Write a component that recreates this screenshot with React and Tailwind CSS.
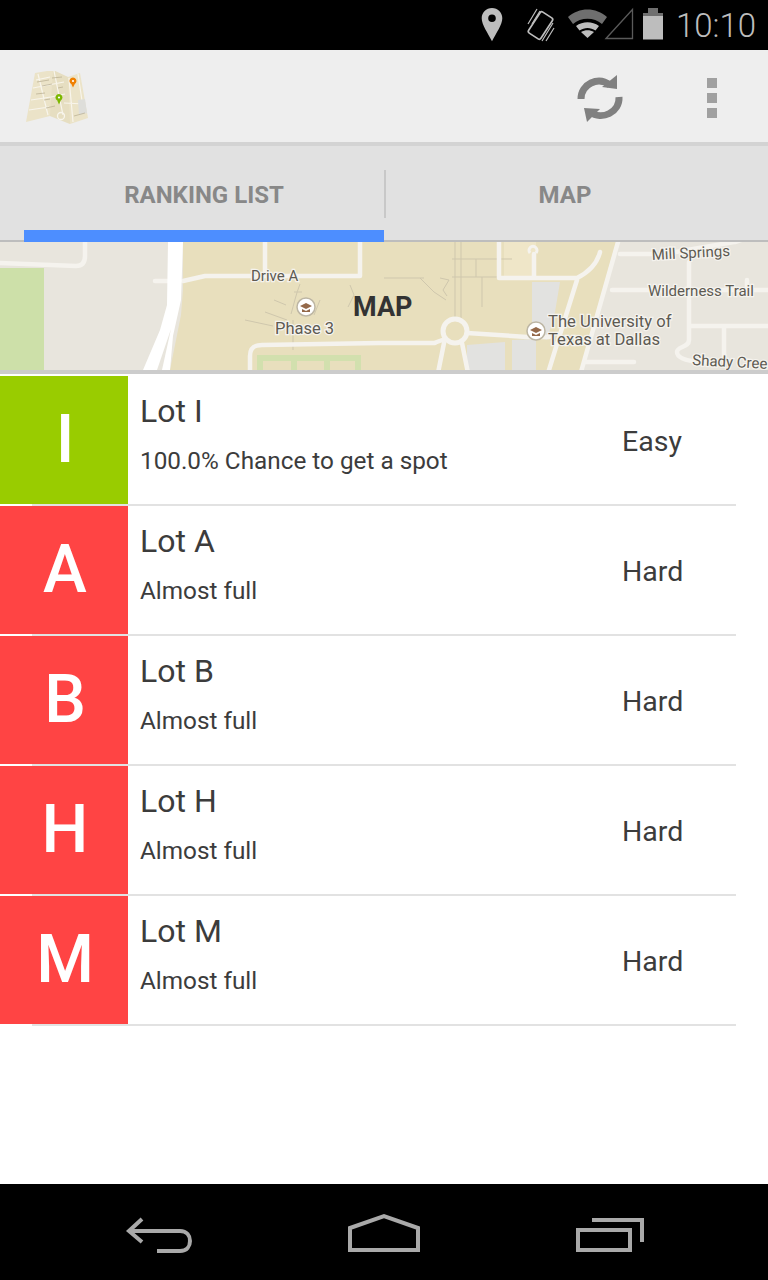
const lots = [
  { letter: 'I', name: 'Lot I', note: '100.0% Chance to get a spot', level: 'Easy', color: 'bg-[#99cc00]' },
  { letter: 'A', name: 'Lot A', note: 'Almost full', level: 'Hard', color: 'bg-[#ff4444]' },
  { letter: 'B', name: 'Lot B', note: 'Almost full', level: 'Hard', color: 'bg-[#ff4444]' },
  { letter: 'H', name: 'Lot H', note: 'Almost full', level: 'Hard', color: 'bg-[#ff4444]' },
  { letter: 'M', name: 'Lot M', note: 'Almost full', level: 'Hard', color: 'bg-[#ff4444]' },
];

function StatusIcons() {
  // viewBox uses screen coordinates so the glyphs can be compared 1:1
  return (
    <svg width="190" height="50" viewBox="476 0 190 50">
      {/* location pin */}
      <path fillRule="evenodd" fill="#bdbdbd" d="M492 8c5.800 0 10.300 4.500 10.300 10.200 0 6.600-6.200 14.800-10.300 23-4.100-8.200-10.300-16.400-10.300-23C481.700 12.500 486.200 8 492 8zm0 6.500a3.800 3.800 0 1 0 0 7.600 3.800 3.800 0 0 0 0-7.600z" />
      {/* vibrate phone */}
      <g fill="none" stroke="#bdbdbd">
        <rect x="533.200" y="13" width="14.600" height="25" rx="2" strokeWidth="1.700" transform="rotate(33 540.500 25.500)" />
        <path strokeWidth="1.200" d="M528 24l9-15M532 24l8-13M542 41l11-18M546 41l8-13" />
      </g>
      {/* wifi */}
      <path fill="#6f6f6f" d="M568 17c11-10 28-10 39 0l-5 7c-8-7-21-7-29 0z" />
      <path fill="#bdbdbd" d="M576 26c7-5 16-5 23 0l-3.500 4.500c-5-3.500-11-3.500-16 0z" />
      <path fill="#bdbdbd" d="M581 32c4-2.500 9-2.500 13 0l-6.500 6z" />
      {/* signal */}
      <path fill="none" stroke="#5a5a5a" strokeWidth="1.300" d="M606 38.500L632.500 9.500v29z" />
      {/* battery */}
      <path fill="#6f6f6f" d="M648 8h10v5h5v3h-20v-3h5z" />
      <rect x="643" y="16" width="20" height="23.500" fill="#bdbdbd" />
    </svg>
  );
}

function SyncIcon() {
  return (
    <svg width="52" height="56" viewBox="574 71 52 56" fill="none">
      <path stroke="#808080" strokeWidth="7" d="M581 99c0-15 17-23 29-14" />
      <path fill="#808080" d="M617 75v14l-15-2z" />
      <path stroke="#808080" strokeWidth="7" d="M619 97c1 15-17 24-29 15" />
      <path fill="#808080" d="M584 108l16 1-13 13z" />
    </svg>
  );
}

function AppLogo() {
  return (
    <svg width="66" height="56" viewBox="24 71 66 56">
      <path fill="#ebe3c8" d="M26 122l9-49 18-3 15 7 12-4 8 45-18 6-20-8z" />
      <path fill="#dcd3b4" d="M53 70l15 7 2 47-20-8z" opacity="0.35" />
      <path fill="none" stroke="#f8f5ec" strokeWidth="1.200" d="M31 100l20-3 14-3M38 74l7 29 3 12M54 71l9 44M33 88l31-6M64 103l21 1M69 78l4 44M78 74l6 40M36 80l14-3M29 110l20-3" />
      <path fill="#dededa" d="M78 100l7-1 2 14-8 2z" />
      <path fill="none" stroke="#bdb295" strokeWidth="0.800" d="M37 82l12-2M42 86l10-2M46 108l9-2M74 116l11-3M52 78l10-1M36 94l9-1M58 88l5-1M44 100l6-1" />
      <circle cx="61" cy="116" r="3.500" fill="none" stroke="#f8f5ec" strokeWidth="1.300" />
      <path fill="#7cb800" d="M59 94a3.500 3.500 0 1 1-.1 0zM57 100h4l-2 4.500z" />
      <circle cx="59" cy="97.500" r="1.100" fill="#fff" />
      <path fill="#f08000" d="M73 77.500a3.500 3.500 0 1 1-.1 0zM71 83.500h4l-2 4z" />
      <circle cx="73" cy="81" r="1.100" fill="#fff" />
    </svg>
  );
}

function MapStrip() {
  const road = { fill: 'none', stroke: '#f5f3ee', strokeLinecap: 'round', strokeLinejoin: 'round' };
  const trail = { fill: 'none', stroke: '#cfc7ad', strokeWidth: 1 };
  const label = { fontFamily: 'Roboto, sans-serif', fill: '#5d5a52', stroke: '#f5f3ee', strokeWidth: 2.500, paintOrder: 'stroke' };
  return (
    <svg width="768" height="128" viewBox="0 242 768 128" className="block">
      <rect x="0" y="242" width="768" height="128" fill="#e8e5dd" />
      <rect x="0" y="268" width="44" height="102" fill="#cde0a9" />
      <path fill="#e8dfbd" d="M183 242h433l-36 128H170l11-55 2-25z" />
      <path fill="#e2e2e0" d="M532 282h28l-5 30-8 28-15-6zM467 345l38-3v28h-38zM512 340l24-1v31h-24z" />
      <path fill="#efe6c8" d="M504 242h32v36h-32z" />

      {/* campus paths and parking grid */}
      <path {...trail} d="M455 242v76M461 242v76M452 259h60M452 277h60M476 259v18M482 277v30M440 278l9 2-6 10 4 6M300 284c-4 10-6 20-9 30M302 292l-8 0M293 320v30M245 320l28 6M350 285l4 10-6 12M384 278l40 0M420 278l14 14 12 8M265 312l22 8M274 300l12 5M320 300l-6 15" />
      <path fill="none" stroke="#d2e0ae" strokeWidth="6" d="M260 370v-12h98v12M294 358v12M327 358v12" />

      {/* roads */}
      <g {...road} strokeWidth="4.500">
        <path d="M0 263l76 3c6 0 9-3 9-10v-14M155 281h13M183 281l22-5h155M265 242v34M360 242v34" />
        <path d="M250 372v-16c0-8 4-11 12-11l118-2h54l14-5M467 333l60 4h22M410 343h25" />
        <path d="M499 242v36h78c12-6 20-14 23-26M534 254v24M577 280l-20 64-8 26" />
        <path d="M618 242l-37 130M620 254h32M612 290h180M689 262v78c0 8-12 6-12 12 0 6 10 9 24 10h10M689 326h90M724 326v36M584 362h50M735 242l30-10M664 254l70-12M747 280v8M444 343l-6 30M462 343l6 30" />
      </g>
      <circle cx="455" cy="331" r="12" fill="#e8dfbd" stroke="#f5f3ee" strokeWidth="5" />
      <path fill="none" stroke="#f5f3ee" strokeWidth="3" d="M530 253a4 4 0 1 1 6 0" />
      <path fill="#ffffff" d="M168 242h15l-2 58-8 36-3 34h-8l9-41-14 41h-14l17-40 7-25z" />

      {/* places */}
      <circle cx="306" cy="307" r="9" fill="#fff" stroke="#bdb6a4" strokeWidth="1.500" />
      <path fill="#94694a" d="M300 306l6-3 6 3-6 3zM302 309l4 2 4-2v3h-8z" />
      <circle cx="536" cy="331" r="9" fill="#fff" stroke="#bdb6a4" strokeWidth="1.500" />
      <path fill="#94694a" d="M530 330l6-3 6 3-6 3zM532 333l4 2 4-2v3h-8z" />

      <text x="251" y="281" fontSize="15" {...label}>Drive A</text>
      <text x="275" y="334" fontSize="16.500" {...label}>Phase 3</text>
      <text x="548" y="327" fontSize="16.600" {...label}>The University of</text>
      <text x="548" y="345" fontSize="16.600" {...label}>Texas at Dallas</text>
      <text x="648" y="296" fontSize="15" {...label}>Wilderness Trail</text>
      <text x="652" y="260" fontSize="15" transform="rotate(-3 652 260)" {...label}>Mill Springs</text>
      <text x="692" y="365" fontSize="15" transform="rotate(3 692 365)" {...label}>Shady Cree</text>
      <text x="353" y="316" fontSize="27" fontWeight="700" fontFamily="Roboto, sans-serif" fill="#333333">MAP</text>
    </svg>
  );
}

function NavBar() {
  return (
    <div className="h-24 bg-black shrink-0">
      <svg width="768" height="96" viewBox="0 1184 768 96" className="block" fill="none" stroke="#a9a9a9" strokeWidth="4">
        <path d="M142 1219l-13 12 13 11M130 1231h50c7 0 10 5 10 10s-3 10-10 10h-23" />
        <path d="M350 1250v-22l34-12 34 12v22z" />
        <path d="M578 1230h52v20h-52zM592 1220h50v22" />
      </svg>
    </div>
  );
}

export default function App() {
  return (
    <div className="w-[768px] h-[1280px] flex flex-col bg-white overflow-hidden font-['Roboto',sans-serif]">
      {/* status bar */}
      <div className="h-[50px] bg-black flex items-center shrink-0 pl-[476px]">
        <StatusIcons />
        <span className="ml-[10px] text-[33px] font-light text-[#bdbdbd] leading-none">10:10</span>
      </div>

      {/* action bar */}
      <div className="h-24 bg-[#eeeeee] border-b-4 border-[#d3d3d3] flex items-center shrink-0 pl-6 pt-[6px]">
        <AppLogo />
        <div className="ml-[484px]">
          <SyncIcon />
        </div>
        <div className="ml-[81px] -mt-[2px] flex flex-col gap-[5px]">
          <div className="w-[10px] h-[10px] bg-[#a0a0a0]" />
          <div className="w-[10px] h-[10px] bg-[#a0a0a0]" />
          <div className="w-[10px] h-[10px] bg-[#a0a0a0]" />
        </div>
      </div>

      {/* tabs */}
      <div className="h-24 bg-[#e1e1e1] border-b-2 border-[#bdbdbd] flex shrink-0">
        <div className="w-[360px] ml-6 flex flex-col -mb-[2px]">
          <div className="flex-1 flex items-center justify-center pt-[14px]">
            <span className="text-[24px] font-bold text-[#888888]">RANKING LIST</span>
          </div>
          <div className="h-3 w-[360px] bg-[#4d8eff]" />
        </div>
        <div className="w-[2px] h-12 mt-6 bg-[#c8c8c8]" />
        <div className="flex-1 flex items-center justify-center pr-6 pt-[4px]">
          <span className="text-[24px] font-bold text-[#888888]">MAP</span>
        </div>
      </div>

      {/* map preview */}
      <div className="h-[132px] border-b-4 border-[#cccccc] shrink-0">
        <MapStrip />
      </div>

      {/* lots */}
      <div className="flex-1 pt-[2px]">
        {lots.map(lot => (
          <div key={lot.letter}>
            <div className="h-32 flex">
              <div className={`w-32 h-32 ${lot.color} flex items-center justify-center pl-[2px] text-white text-[66px] font-medium leading-none`}>
                {lot.letter}
              </div>
              <div className="w-[494px] pl-[12px] text-[#3c3c3c]">
                <div className="text-[32px] leading-none mt-[19px]">{lot.name}</div>
                <div className="text-[24.300px] leading-none mt-[22px]">{lot.note}</div>
              </div>
              <div className="pt-[52px] text-[28.500px] leading-none text-[#3c3c3c]">{lot.level}</div>
            </div>
            <div className="h-[2px] ml-8 w-[704px] bg-[#e2e2e2]" />
          </div>
        ))}
      </div>

      <NavBar />
    </div>
  );
}
